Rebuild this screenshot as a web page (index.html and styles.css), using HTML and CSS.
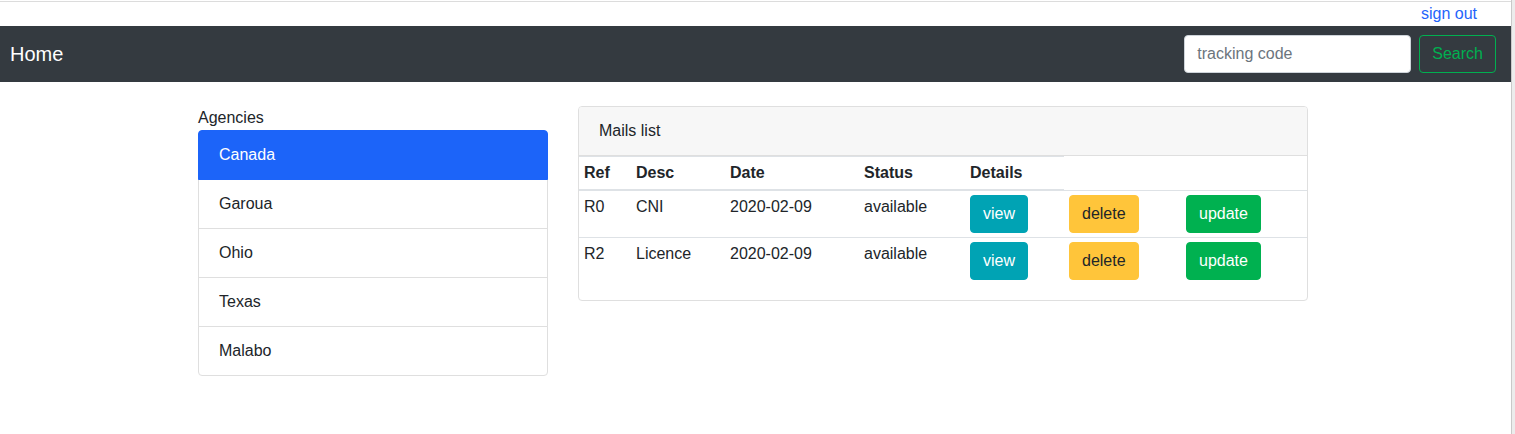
FILE: index.html
```html
<!DOCTYPE html>
<html lang="en">
<head>
<meta charset="utf-8">
<title>Mails</title>
<link rel="stylesheet" href="styles.css">
</head>
<body>
<div class="frame">
  <div class="topbar"><a class="signout" href="#">sign out</a></div>
  <nav class="navbar">
    <a class="brand" href="#">Home</a>
    <form class="search">
      <input class="search-input" type="text" placeholder="tracking code">
      <button class="btn btn-outline-success" type="button">Search</button>
    </form>
  </nav>
  <main class="content">
    <aside class="agencies">
      <div class="agencies-label">Agencies</div>
      <ul class="list-group">
        <li class="list-item active">Canada</li>
        <li class="list-item">Garoua</li>
        <li class="list-item">Ohio</li>
        <li class="list-item">Texas</li>
        <li class="list-item">Malabo</li>
      </ul>
    </aside>
    <section class="card">
      <div class="card-header">Mails list</div>
      <table class="table">
        <colgroup>
          <col class="c-ref"><col class="c-desc"><col class="c-date"><col class="c-status"><col class="c-details"><col class="c-delete"><col class="c-update">
        </colgroup>
        <thead>
          <tr><th>Ref</th><th>Desc</th><th>Date</th><th>Status</th><th>Details</th></tr>
        </thead>
        <tbody>
          <tr>
            <td>R0</td><td>CNI</td><td>2020-02-09</td><td>available</td>
            <td><button class="btn btn-info" type="button">view</button></td>
            <td><button class="btn btn-warning" type="button">delete</button></td>
            <td><button class="btn btn-success" type="button">update</button></td>
          </tr>
          <tr>
            <td>R2</td><td>Licence</td><td>2020-02-09</td><td>available</td>
            <td><button class="btn btn-info" type="button">view</button></td>
            <td><button class="btn btn-warning" type="button">delete</button></td>
            <td><button class="btn btn-success" type="button">update</button></td>
          </tr>
        </tbody>
      </table>
    </section>
  </main>
</div>
</body>
</html>
```
FILE: styles.css
```css
* { box-sizing: border-box; }

html, body {
  margin: 0;
  padding: 0;
}

body {
  background: #ececec;
  font-family: "Liberation Sans", Arial, Helvetica, sans-serif;
  font-size: 16px;
  line-height: 24px;
  color: #212529;
}

.frame {
  width: 1512px;
  min-height: 100vh;
  background: #ffffff;
  border-right: 1px solid #c9c9c9;
  padding-top: 1px;
}

.topbar {
  border-top: 1px solid #dcdcdc;
  height: 25px;
  display: flex;
  justify-content: flex-end;
  padding-right: 34px;
}

.signout {
  color: #1f64fb;
  text-decoration: none;
  line-height: 24px;
}

.navbar {
  height: 56px;
  background: #343a40;
  display: flex;
  align-items: center;
  justify-content: space-between;
  padding: 0 15px 0 10px;
}

.brand {
  color: #ffffff;
  text-decoration: none;
  font-size: 20px;
  line-height: 30px;
}

.search {
  display: flex;
  align-items: center;
  gap: 8px;
  margin: 0;
}

.search-input {
  width: 227px;
  height: 38px;
  padding: 6px 12px;
  font-family: inherit;
  font-size: 16px;
  color: #495057;
  background: #ffffff;
  border: 1px solid #ced4da;
  border-radius: 4px;
  outline: none;
}

.search-input::placeholder {
  color: #6c757d;
  opacity: 1;
}

.btn {
  display: inline-block;
  font-family: inherit;
  font-size: 16px;
  line-height: 24px;
  padding: 6px 12px;
  border: 1px solid transparent;
  border-radius: 4px;
  cursor: pointer;
  height: 38px;
}

.btn-outline-success {
  color: #00b050;
  background: transparent;
  border-color: #00b050;
}

.btn-info {
  color: #ffffff;
  background: #00a3b4;
  border-color: #00a3b4;
}

.btn-warning {
  color: #212529;
  background: #ffc53a;
  border-color: #ffc53a;
}

.btn-success {
  color: #ffffff;
  background: #00b150;
  border-color: #00b150;
}

.content {
  display: flex;
  align-items: flex-start;
  gap: 30px;
  padding: 24px 0 0 198px;
}

.agencies {
  width: 350px;
}

.agencies-label {
  line-height: 24px;
}

.list-group {
  list-style: none;
  margin: 0;
  padding: 0;
}

.list-item {
  position: relative;
  padding: 12px 20px;
  line-height: 24px;
  border: 1px solid #dfdfdf;
  background: #ffffff;
  margin-top: -1px;
}

.list-item:first-child {
  margin-top: 0;
  border-radius: 4px 4px 0 0;
}

.list-item:last-child {
  border-radius: 0 0 4px 4px;
}

.list-item.active {
  z-index: 1;
  background: #1c64f9;
  border-color: #1c64f9;
  color: #ffffff;
}

.card {
  width: 730px;
  border: 1px solid #dfdfdf;
  border-radius: 4px;
  background: #ffffff;
}

.card-header {
  padding: 12px 20px;
  line-height: 24px;
  background: #f7f7f7;
  border-bottom: 1px solid #dfdfdf;
  border-radius: 3px 3px 0 0;
}

.table {
  width: 100%;
  table-layout: fixed;
  border-collapse: collapse;
  margin-bottom: 16px;
}

.c-ref { width: 52px; }
.c-desc { width: 94px; }
.c-date { width: 134px; }
.c-status { width: 106px; }
.c-details { width: 99px; }
.c-delete { width: 117px; }
.c-update { width: 126px; }

.table th,
.table td {
  padding: 4px 4px 4px 5px;
  text-align: left;
  vertical-align: top;
  border-top: 1px solid #dee2e6;
}

.table th {
  font-weight: bold;
  border-bottom: 2px solid #dee2e6;
}
```
